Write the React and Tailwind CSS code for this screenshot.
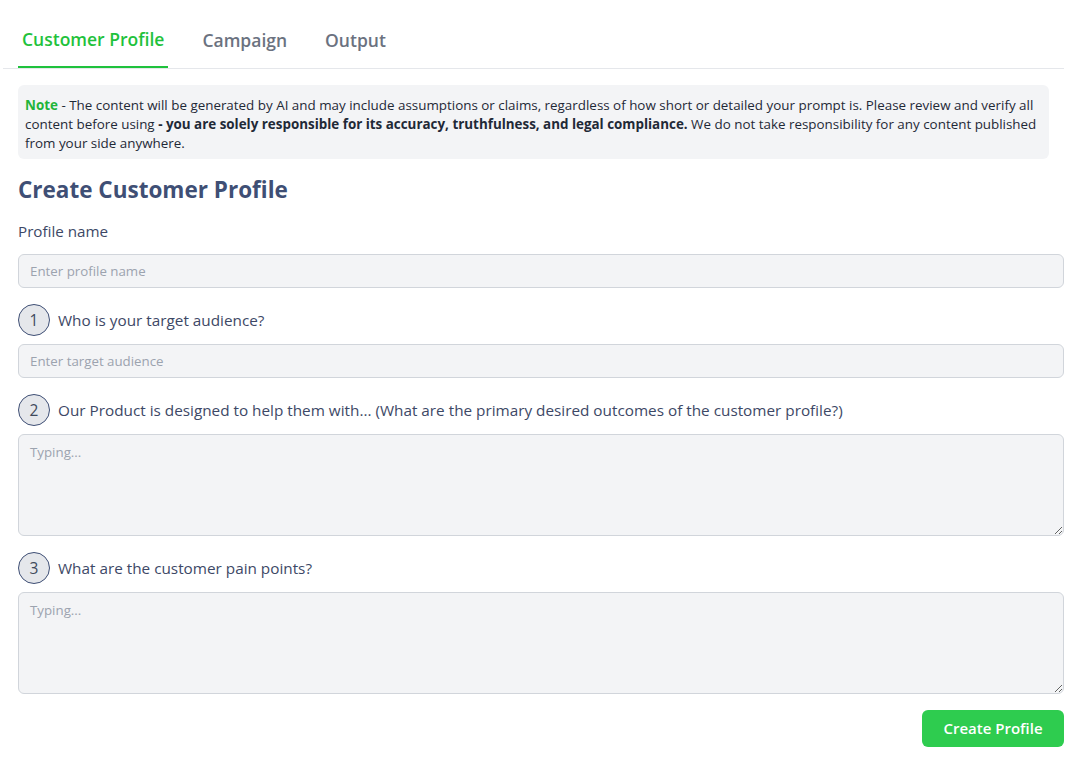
import React from "react";

function Step({ n, children }) {
  return (
    <div className="flex items-center gap-2 mt-4 mb-2">
      <div className="w-8 h-8 rounded-full border border-[#3f4f75] bg-[#e5e7eb] flex items-center justify-center text-[15.5px] leading-none pt-[2px] text-[#3f4a5c]">
        {n}
      </div>
      <span className="text-[15.3px] text-[#3d4866]">{children}</span>
    </div>
  );
}

export default function App() {
  return (
    <div className="bg-white min-h-[765px] w-[1072px] text-[#374151]" style={{ fontFamily: '"Open Sans", sans-serif' }}>
      <div className="ml-[3px] mr-[8px] border-b border-[#e5e7eb] flex pl-[15px] gap-[30px]">
        <div className="px-1 h-[68px] flex items-center border-b-2 border-[#1fc23c] text-[#1fc23c] text-[17.5px] font-semibold pt-3 -mb-px">
          Customer Profile
        </div>
        <div className="px-1 h-[68px] flex items-center text-[#6b7280] text-[17.5px] font-semibold pt-3">Campaign</div>
        <div className="px-1 h-[68px] flex items-center text-[#6b7280] text-[17.5px] font-semibold pt-3">Output</div>
      </div>
      <div className="px-[18px] pr-[8px]">
        <div className="mt-[16px] w-[1031px] bg-[#f3f4f6] rounded-md px-[7px] pt-[11px] pb-[6px] text-[13.4px] leading-[19px] text-[#1f2937]">
          <span className="text-[#1fb53a] font-bold">Note</span> - The content will be generated by AI and may include assumptions or claims, regardless of how short or detailed your prompt is. Please review and verify all content before using <b className="font-bold">- you are solely responsible for its accuracy, truthfulness, and legal compliance.</b> We do not take responsibility for any content published from your side anywhere.
        </div>
        <h1 className="mt-[16px] text-[22.5px] font-bold text-[#3f4f75] leading-[30px]">Create Customer Profile</h1>
        <div className="mt-[15px] text-[15.2px] text-[#3d4866] leading-[22px]">Profile name</div>
        <input
          className="mt-[12px] w-full h-[34px] bg-[#f3f4f6] border border-[#d1d5db] rounded-md px-[11px] text-[13.3px] placeholder-[#9ca3af] outline-none"
          placeholder="Enter profile name"
        />
        <Step n="1">Who is your target audience?</Step>
        <input
          className="w-full h-[34px] bg-[#f3f4f6] border border-[#d1d5db] rounded-md px-[11px] text-[13.3px] placeholder-[#9ca3af] outline-none"
          placeholder="Enter target audience"
        />
        <Step n="2">Our Product is designed to help them with... (What are the primary desired outcomes of the customer profile?)</Step>
        <textarea
          className="block w-full h-[102px] bg-[#f3f4f6] border border-[#d1d5db] rounded-md px-[11px] py-2 text-[13.3px] placeholder-[#9ca3af] outline-none"
          placeholder="Typing..."
        />
        <Step n="3">What are the customer pain points?</Step>
        <textarea
          className="block w-full h-[102px] bg-[#f3f4f6] border border-[#d1d5db] rounded-md px-[11px] py-2 text-[13.3px] placeholder-[#9ca3af] outline-none"
          placeholder="Typing..."
        />
        <div className="flex justify-end mt-4">
          <button className="w-[142px] h-[37px] bg-[#2ecc4f] rounded-md text-white text-[15px] font-semibold">
            Create Profile
          </button>
        </div>
      </div>
    </div>
  );
}
